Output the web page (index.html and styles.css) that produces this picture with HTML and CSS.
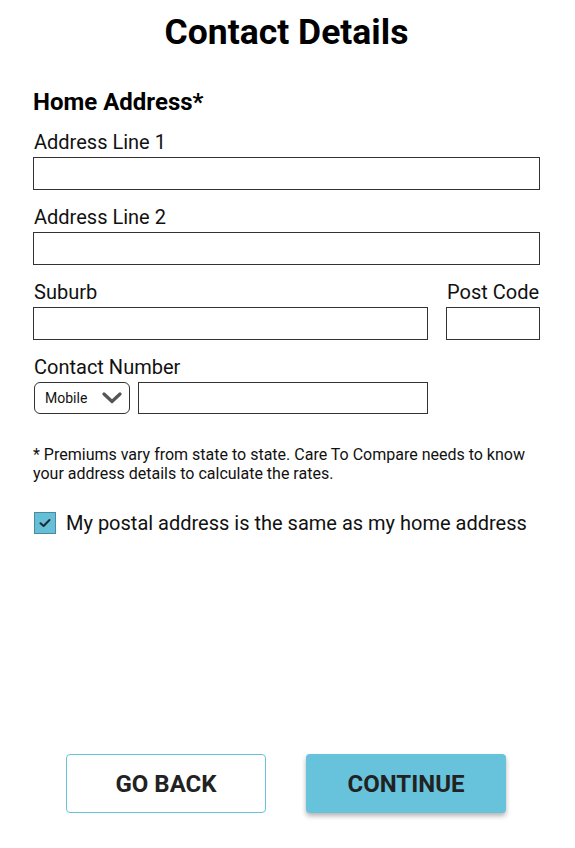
FILE: index.html
```html
<!DOCTYPE html>
<html lang="en">
<head>
<meta charset="utf-8">
<title>Contact Details</title>
<link rel="stylesheet" href="styles.css">
</head>
<body>
<main class="page">
  <h1 class="title">Contact Details</h1>
  <form class="form">
    <h2 class="section-title">Home Address*</h2>
    <div class="field">
      <label class="label">Address Line 1</label>
      <input class="input" type="text">
    </div>
    <div class="field">
      <label class="label">Address Line 2</label>
      <input class="input" type="text">
    </div>
    <div class="field row">
      <div class="col grow">
        <label class="label">Suburb</label>
        <input class="input" type="text">
      </div>
      <div class="col postcode">
        <label class="label">Post Code</label>
        <input class="input" type="text">
      </div>
    </div>
    <div class="field">
      <label class="label">Contact Number</label>
      <div class="phone-row">
        <div class="select">
          <span class="select-text">Mobile</span>
          <svg class="chevron" width="20" height="12" viewBox="0 0 20 12"><path d="M2 2 L10 9.5 L18 2" fill="none" stroke="#555" stroke-width="3.2" stroke-linecap="round" stroke-linejoin="round"/></svg>
        </div>
        <input class="input phone" type="text">
      </div>
    </div>
    <p class="note">* Premiums vary from state to state. Care To Compare needs to know your address details to calculate the rates.</p>
    <label class="check">
      <span class="box"><svg width="14" height="12" viewBox="0 0 14 12"><path d="M2.5 6.2 L5.6 9 L11.5 3" fill="none" stroke="#1e2a30" stroke-width="2" stroke-linecap="round" stroke-linejoin="round"/></svg></span>
      <span class="check-text">My postal address is the same as my home address</span>
    </label>
  </form>
  <div class="actions">
    <button class="btn btn-outline" type="button">GO BACK</button>
    <button class="btn btn-primary" type="button">CONTINUE</button>
  </div>
</main>
</body>
</html>
```
FILE: styles.css
```css
* { box-sizing: border-box; }
html, body { margin: 0; padding: 0; background: #ffffff; }
body {
  font-family: Roboto, "Liberation Sans", Arial, sans-serif;
  color: #111;
}
.page {
  min-height: 848px;
  display: flex;
  flex-direction: column;
  padding: 0 35px 35px 33px;
}
.title {
  margin: 11px 0 0;
  font-size: 35.5px;
  line-height: 42px;
  font-weight: 700;
  text-align: center;
  color: #000;
}
.form {
  display: flex;
  flex-direction: column;
}
.section-title {
  margin: 36px 0 0;
  font-size: 24px;
  line-height: 26px;
  font-weight: 700;
  color: #000;
}
.field {
  display: flex;
  flex-direction: column;
  margin-top: 15px;
}
.section-title + .field { margin-top: 15px; }
.col {
  display: flex;
  flex-direction: column;
}
.label {
  font-size: 20px;
  line-height: 24px;
  margin-bottom: 3px;
  padding-left: 1px;
  color: #111;
  white-space: nowrap;
}
.input {
  height: 33px;
  border: 1.5px solid #333;
  border-radius: 0;
  background: #fff;
  margin: 0;
  font: inherit;
  padding: 0 6px;
  min-width: 0;
}
.row {
  flex-direction: row;
  gap: 18px;
}
.grow { flex: 1; min-width: 0; }
.postcode { width: 94px; flex: none; }
.phone-row {
  display: flex;
  gap: 8px;
  width: 395px;
}
.select {
  width: 96px;
  height: 32px;
  border: 1.5px solid #333;
  border-radius: 6px;
  display: flex;
  align-items: center;
  justify-content: space-between;
  padding: 0 7px 0 10px;
  background: #fff;
  margin-left: 1px;
}
.select-text { font-size: 14px; color: #111; }
.chevron { display: block; }
.phone { flex: 1; height: 32px; }
.note {
  margin: 31px 0 0;
  font-size: 16px;
  line-height: 19px;
  color: #111;
}
.check {
  display: flex;
  align-items: center;
  gap: 10px;
  margin-top: 28px;
  padding-left: 1px;
}
.box {
  width: 22px;
  height: 22px;
  background: #64bfd7;
  border: 1px solid #4a8a9c;
  display: flex;
  align-items: center;
  justify-content: center;
  flex: none;
}
.box svg { display: block; }
.check-text {
  font-size: 20px;
  line-height: 24px;
  color: #111;
}
.actions {
  margin-top: auto;
  display: flex;
  justify-content: center;
  gap: 40px;
  padding-right: 1px;
}
.btn {
  width: 200px;
  height: 59px;
  border-radius: 4px;
  font-family: Roboto, "Liberation Sans", Arial, sans-serif;
  font-size: 24px;
  font-weight: 700;
  color: #222;
  cursor: pointer;
}
.btn-outline {
  background: #fff;
  border: 1px solid #66c3db;
}
.btn-primary {
  background: #66c3db;
  border: none;
  box-shadow: 0 3px 5px rgba(0, 0, 0, 0.3);
}
```
